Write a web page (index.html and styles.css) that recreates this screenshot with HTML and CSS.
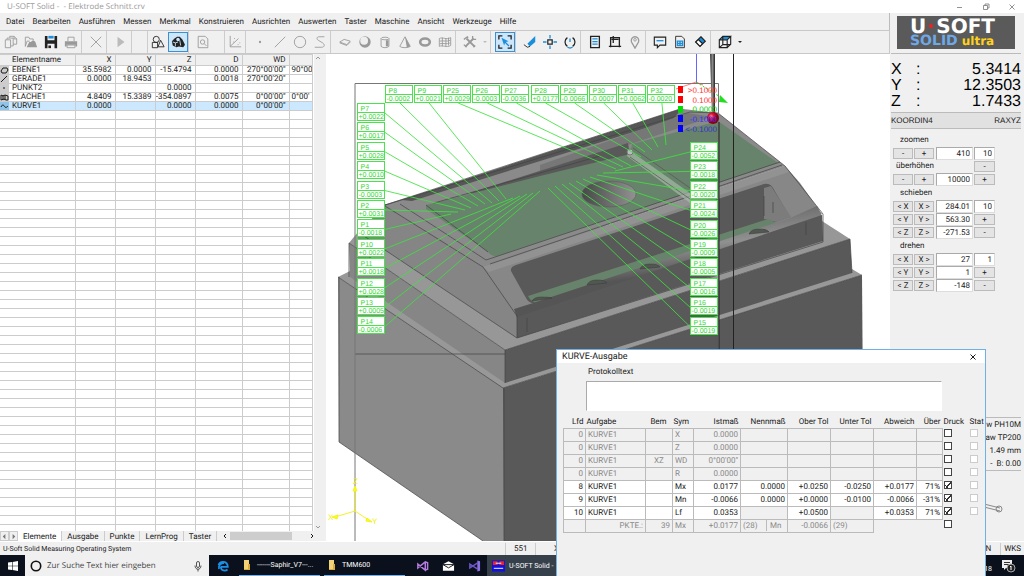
FILE: index.html
```html
<!DOCTYPE html>
<html lang="de">
<head>
<meta charset="utf-8">
<title>U-SOFT Solid - Elektrode Schnitt.crv</title>
<link rel="stylesheet" href="styles.css">
</head>
<body>
<div class="desktop">
  <header class="titlebar">
    <span>U-SOFT Solid -&nbsp; - Elektrode Schnitt.crv</span>
    <div class="window-buttons">
      <button type="button" aria-label="Minimieren"><svg viewBox="0 0 8 8"><path d="M1 4.500h5"/></svg></button>
      <button type="button" aria-label="Wiederherstellen"><svg viewBox="0 0 8 8"><path d="M1.500 2.500h4v4h-4zM3 2.500V1h4v4H5.500"/></svg></button>
      <button type="button" aria-label="Schließen"><svg viewBox="0 0 8 8"><path d="M1.500 1.500l5 5M6.500 1.500l-5 5"/></svg></button>
    </div>
  </header>

  <div class="app">
    <div class="main">
      <nav class="menu" aria-label="Hauptmenü">
        <button type="button">Datei</button><button type="button">Bearbeiten</button><button type="button">Ausführen</button><button type="button">Messen</button><button type="button">Merkmal</button><button type="button">Konstruieren</button><button type="button">Ausrichten</button><button type="button">Auswerten</button><button type="button">Taster</button><button type="button">Maschine</button><button type="button">Ansicht</button><button type="button">Werkzeuge</button><button type="button">Hilfe</button>
      </nav>

      <div class="toolbar" role="toolbar" aria-label="Werkzeuge">
        <button type="button" class="tool" aria-label="Neu"><svg viewBox="0 0 16 16"><path d="M1.500 5.500h6v9h-6zM3.500 5V3.500h7v9H8M6.500 3V1.500h5l3 3v6h-4M11.500 1.500v3h3"/></svg></button>
        <button type="button" class="tool" aria-label="Öffnen"><svg viewBox="0 0 16 16"><path d="M1.500 13V2.500h4l1 2h4v2M1.500 13l2-6h3"/><path class="fill" d="M3 14l3-6h2c1-2 4-2 5 0l2 6z"/></svg></button>
        <button type="button" class="tool dark" aria-label="Speichern"><svg viewBox="0 0 16 16"><path class="fill" d="M1 1h3v5h8V1h3v14h-3v-5H4v5H1z"/><path class="bluefill" d="M5 1h6v3H5z"/><path class="fill" d="M5 12h3v3H5z"/></svg></button>
        <button type="button" class="tool" aria-label="Drucken"><svg viewBox="0 0 16 16"><path d="M4.500 7V2.500h7V7"/><path class="fill" d="M1 7h14v6h-2v-2H3v2H1z"/><path d="M3.500 11.500h9v3h-9z"/></svg></button>
        <span class="sep"></span>
        <button type="button" class="tool" aria-label="Löschen"><svg viewBox="0 0 16 16"><path d="M2 2l12 12M14 2L2 14"/></svg></button>
        <span class="sep"></span>
        <button type="button" class="tool pale" aria-label="Start"><svg viewBox="0 0 16 16"><path class="fill" d="M4 2l8 6-8 6z"/></svg></button>
        <span class="sep wide"></span>
        <button type="button" class="tool dark" aria-label="Elemente"><svg viewBox="0 0 16 16"><circle cx="6" cy="5" r="3.500"/><path d="M1.500 8.500h6v6h-6zM11 6l4 7.500H8z"/></svg></button>
        <button type="button" class="tool dark active" aria-label="Flächenmodell" aria-pressed="true"><svg viewBox="0 0 16 16"><path class="fill" d="M1 7l3-3 3-2h3l3 3 3 6-2 3-5-1-3 1-4-2z"/><circle cx="8" cy="5" r="2" fill="#cce6fb" stroke="none"/><path d="M2 8l3 1 3-1M5 9v4M10 6l1 6" stroke="#cce6fb"/></svg></button>
        <span class="sep"></span>
        <button type="button" class="tool" aria-label="Vorschau"><svg viewBox="0 0 16 16"><path d="M2.500 1.500h8l3 3v10h-11z"/><circle cx="7.500" cy="8" r="2.500"/><path d="M9.500 10l2.500 2.500"/></svg></button>
        <span class="sep end"></span>
        <button type="button" class="tool" aria-label="Koordinaten"><svg viewBox="0 0 16 16"><path d="M2.500 1v12.500H15M2.500 13L12 4M7 4h1M13 9h1M6 8h1M11 11h1"/></svg></button>
        <span class="sep"></span>
        <button type="button" class="tool" aria-label="Punkt"><svg viewBox="0 0 16 16"><circle class="fill" cx="8" cy="8" r="1.300"/></svg></button>
        <button type="button" class="tool" aria-label="Gerade"><svg viewBox="0 0 16 16"><path d="M2 14L14 2"/></svg></button>
        <button type="button" class="tool" aria-label="Kreis"><svg viewBox="0 0 16 16"><circle cx="8" cy="8" r="6.500"/></svg></button>
        <button type="button" class="tool" aria-label="Kurve"><svg viewBox="0 0 16 16"><path d="M13 2H7C4 2 4 5 6 6l5 3c3 2 2 5-1 5H2"/></svg></button>
        <span class="sep"></span>
        <button type="button" class="tool" aria-label="Ebene"><svg viewBox="0 0 16 16"><path d="M2 8l5-3 7 2-4 4z"/><path d="M2 9l8 3 4-4" /></svg></button>
        <button type="button" class="tool" aria-label="Kugel"><svg viewBox="0 0 16 16"><circle class="fill" cx="8" cy="8" r="6.500"/><circle cx="7" cy="6.500" r="4.500" fill="#eee" stroke="none"/></svg></button>
        <button type="button" class="tool" aria-label="Zylinder"><svg viewBox="0 0 16 16"><path d="M3.500 4v9c2 2 7 2 9 0V4"/><ellipse cx="8" cy="4" rx="4.500" ry="1.500"/><path class="fill" d="M9 6h3v7H9z"/></svg></button>
        <button type="button" class="tool" aria-label="Kegel"><svg viewBox="0 0 16 16"><path d="M8 2L2 13c2 2 10 2 12 0z"/><path class="fill" d="M8 2l6 11-4 1z"/></svg></button>
        <button type="button" class="tool" aria-label="Torus"><svg viewBox="0 0 16 16"><ellipse cx="8" cy="8" rx="5.500" ry="4" stroke-width="3"/></svg></button>
        <button type="button" class="tool" aria-label="Fläche"><svg viewBox="0 0 16 16"><path d="M1.500 4c4-2 8 2 13-1v9c-5 3-9-1-13 1zM5 3v10M9 4v9M12 3v9M2 7c4-1 8 1 12-1M2 10c4-1 8 1 12-1"/></svg></button>
        <span class="sep"></span>
        <button type="button" class="tool" aria-label="Einstellungen"><svg viewBox="0 0 16 16"><path stroke-width="2.200" d="M4 4l9 9M12 4l-9 9"/><path stroke-width="1.500" d="M1 5l4-3 1 1M11 1v3l1 1h3M1 11l3 3M12 14l2-2"/></svg></button>
        <button type="button" class="drop pale" aria-label="Mehr Einstellungen"><svg viewBox="0 0 6 6"><path d="M1 2h4L3 4z"/></svg></button>
        <span class="sep"></span>
        <button type="button" class="tool dark active" aria-label="Auswahl" aria-pressed="true"><svg viewBox="0 0 16 16"><path stroke-width="1.500" d="M1 5V1h4M11 1h4v4M15 11v4h-4M5 15H1v-4"/><path class="bluefill" d="M4 3l8 4-3 1 4 4-1 1-4-4-1 3z"/></svg></button>
        <span class="sep"></span>
        <button type="button" class="tool dark" aria-label="Markieren"><svg viewBox="0 0 16 16"><path class="bluefill" d="M14 1v7l-6 5-3-3z"/><path d="M1 11l4 3 3-1"/></svg></button>
        <button type="button" class="tool dark" aria-label="Zentrieren"><svg viewBox="0 0 16 16"><path stroke-width="1.400" d="M5.500 5.500h5v5h-5z"/><path class="blueline" d="M8 0v4M8 12v4M0 8h4M12 8h4"/></svg></button>
        <button type="button" class="tool dark" aria-label="Drehen"><svg viewBox="0 0 16 16"><path stroke-width="1.400" d="M5 3a6 6 0 0 0 0 10M11 3a6 6 0 0 1 0 10"/><path class="blueline" d="M8 4v4M5 14l3 1 3-1"/></svg></button>
        <span class="sep"></span>
        <button type="button" class="tool dark" aria-label="Protokoll"><svg viewBox="0 0 16 16"><path stroke-width="1.500" d="M3 1.500h10v13H3z"/><path class="blueline" d="M5 4.500h6M5 7.500h6M5 10.500h6"/></svg></button>
        <button type="button" class="tool dark" aria-label="Maschine"><svg viewBox="0 0 16 16"><path stroke-width="1.500" d="M3 14V3h10v11M1 13h14M6 1v8M4 5h8"/></svg></button>
        <button type="button" class="tool" aria-label="Position"><svg viewBox="0 0 16 16"><path stroke-width="1.500" d="M8 15L4 8c-2-8 10-8 8 0z"/><circle cx="8" cy="5.500" r="1.500"/></svg></button>
        <span class="sep"></span>
        <button type="button" class="tool dark" aria-label="Kommentar"><svg viewBox="0 0 16 16"><path stroke-width="1.300" d="M1.500 2.500h13v9H8l-3 3v-3H1.500z"/><path class="blueline" d="M4 6.500h8"/></svg></button>
        <button type="button" class="tool dark" aria-label="Tabelle"><svg viewBox="0 0 16 16"><path d="M3 1.500h7l3 3v10H3z"/><path class="blueline" d="M5 7h6v5H5zM5 9.500h6M8 7v5"/></svg></button>
        <button type="button" class="tool dark" aria-label="Farbe"><svg viewBox="0 0 16 16"><path class="bluefill" d="M9 2l5 5-3 3-5-5z"/><path fill="#fff" d="M6 5l5 5-3 3-5-5z"/><path stroke-width="1.400" d="M9 2l5 5-6 6-5-5zM6 5l5 5"/></svg></button>
        <span class="sep"></span>
        <button type="button" class="tool dark" aria-label="Ansicht"><svg viewBox="0 0 16 16"><path class="bluefill" d="M2 5l4-3h9l-4 3z"/><path stroke-width="1.300" d="M1.500 5.500h9v9h-9zM1.500 5.500l4-4h9l-4 4M14.500 1.500v9l-4 4M5.500 2v9h9M5.500 11l-4 3.500"/></svg></button>
        <button type="button" class="drop dark" aria-label="Mehr Ansichten"><svg viewBox="0 0 6 6"><path d="M1 2h4L3 4z"/></svg></button>
      </div>

      <div class="workspace">
        <section class="elements">
          <div class="list-area">
            <div class="list">
              <table class="element-table">
                <colgroup><col class="c-name"><col class="c-x"><col class="c-x"><col class="c-x"><col class="c-d"><col class="c-d"><col></colgroup>
                <thead><tr><th class="name">Elementname</th><th>X</th><th>Y</th><th>Z</th><th>D</th><th>WD</th><th></th></tr></thead>
                <tbody id="elements"></tbody>
              </table>
            </div>
            <div class="vscroll"><svg viewBox="0 0 8 8"><path d="M2 5l2-2 2 2"/></svg><svg viewBox="0 0 8 8"><path d="M2 3l2 2 2-2"/></svg></div>
          </div>
          <div class="tabs">
            <button type="button" class="step" aria-label="Zurück"><svg viewBox="0 0 8 8"><path class="fill" d="M5 1v6L2 4z"/></svg></button>
            <button type="button" class="step" aria-label="Vor"><svg viewBox="0 0 8 8"><path class="fill" d="M3 1v6l3-3z"/></svg></button>
            <button type="button" class="tab current">Elemente</button><button type="button" class="tab">Ausgabe</button><button type="button" class="tab">Punkte</button><button type="button" class="tab">LernProg</button><button type="button" class="tab">Taster</button>
            <div class="hscroll"><svg viewBox="0 0 8 8"><path d="M5 2L3 4l2 2"/></svg><i></i><svg viewBox="0 0 8 8"><path d="M3 2l2 2-2 2"/></svg></div>
          </div>
        </section>

        <section class="viewport" aria-label="3D-Ansicht">
          <svg id="scene" viewBox="326 54 564 487" preserveAspectRatio="xMinYMin meet">
            <defs>
              <linearGradient id="hole"><stop offset="0" stop-color="#484848"/><stop offset="1" stop-color="#929292"/></linearGradient>
              <linearGradient id="shaft"><stop offset="0" stop-color="#333"/><stop offset=".5" stop-color="#888"/><stop offset="1" stop-color="#222"/></linearGradient>
              <linearGradient id="bevel" x1="0" y1="0" x2=".35" y2="1"><stop offset=".3" stop-color="#6e6e6e"/><stop offset=".5" stop-color="#909090"/><stop offset=".7" stop-color="#555"/></linearGradient>
              <radialGradient id="ball" cx=".35" cy=".35"><stop offset="0" stop-color="#ff8aa0"/><stop offset=".4" stop-color="#d81838"/><stop offset="1" stop-color="#8a0018"/></radialGradient>
            </defs>
            <g class="solid">
              <path fill="#8a8a8a" d="M338 277L504 388V541H483L339 442z"/>
              <path fill="#595959" d="M503 388L862 275L864 541H504z"/>
              <path fill="#989898" d="M338 277L350 271L505 379L852 269L862 275L503 388z"/>
              <path fill="#868686" d="M349 243L505 350V383L350 277z"/>
              <path fill="#595959" d="M505 350L850 239L852 273L505 383z"/>
              <path fill="#979797" d="M349 243L358 232L400 230L822 221L850 239L505 350z"/>
              <path fill="#858585" d="M385 204L483 266L517 316V338L385 250V240H358V232L385 206z"/>
              <path fill="#8a8a8a" d="M385 205L683 109L718 113L785 166L483 267z"/>
              <path fill="#565656" d="M402 200L683 108L672 120L412 201z"/>
              <path fill="#777" d="M540 165L688 113L712 117L640 141L540 173z"/>
              <path fill="#595959" d="M470 193L628 143L630 156L470 200z"/>
              <path fill="#68836b" d="M426 205L540 176L630 154L632 144L718 121L778 163L497 256Q492 257 488 252L426 209z"/>
              <path fill="#878787" d="M483 267L785 166L800 183L822 214L517 316z"/>
              <path fill="#595959" d="M511 271Q510 267 516 265L764 184Q770 183 773 188L790 217L535 303Q529 304 526 298z"/>
              <path fill="#7c7c7c" d="M764 188L771 186L791 217L776 222L764 219z"/>
              <path fill="#68836b" d="M528 296L768 219L779 224L540 303Q532 304 528 296z"/>
              <path fill="url(#bevel)" d="M530 304L790 218L817 206L822 216L517 318L514 309z"/>
              <path fill="#595959" d="M517 317L822 215L823 241L517 338z"/>
              <path fill="#929292" d="M483 267L785 166L789 172L489 272z"/>
            </g>
            <g fill="none" stroke="#444" stroke-width=".7">
              <path d="M338 277L503 388L862 275M504 388V541M349 243L505 350L850 239L852 273M505 350V383M339 277V442L483 541M349 243V277M385 206L483 267L517 316V338L823 242V214L785 166M385 205L683 108M400 204L486 260L780 162M490 264L782 165M358 232L517 338M385 205L690 112L718 113L785 166M426 205L488 252M434 203L600 156M527 318V332M806 222V235M764 196V216M773 202V213M355 354H505"/>
            </g>
            <ellipse cx="609" cy="194" rx="27" ry="13" fill="url(#hole)" stroke="#555" stroke-width=".5"/>
            <g fill="#505850" stroke="#3a3a3a" stroke-width=".5">
              <path d="M587 285q2-5 10-5t10 3zM640 269q2-5 10-5t10 3zM749 234q2-5 10-5t10 3zM532 301q2-4 10-4t10 1z"/>
            </g>
            <path fill="#a9beaa" fill-opacity=".65" d="M629 150L690 193V203L627 156z"/>
            <path stroke="#555" d="M633 148L690 188M630 157L690 199" stroke-width=".7"/>
            <circle cx="630" cy="152" r="3" fill="#bbb" stroke="#777"/>
            <g fill="none">
              <path stroke="#777" d="M355 541V83.500H718.500V380"/>
              <path stroke="#222" d="M733.500 54V380M719 122V380"/>
              <path stroke="#66f" d="M696.500 54V83"/>
              <path stroke="#f44" stroke-width=".7" d="M676 89L696 82L703 85"/>
              <path stroke="#2d2" stroke-dasharray="2 2" d="M696 82L722 98"/>
            </g>
            <path fill="#2d2" d="M720 95l8 8-9-1z"/>
            <path fill="url(#shaft)" d="M710 54h5v62h-3z"/>
            <g id="leaders"></g>
            <g id="labels"></g>
            <circle cx="713" cy="118" r="6" fill="url(#ball)"/>
            <g class="legend">
              <path fill="#f00" d="M678 86h5v7h-5zM678 96h5v7h-5z"/><path fill="#0d0" d="M678 106h5v7h-5z"/><path fill="#00f" d="M678 115h5v7h-5zM678 125h5v7h-5z"/>
              <text x="717" y="93" fill="#f33">&gt;0.1000</text><text x="717" y="103" fill="#f33">0.1000</text><text x="717" y="112" fill="#0c0">0.0000</text><text x="717" y="122" fill="#33f">-0.1000</text><text x="717" y="132" fill="#33c">&lt;-0.1000</text>
            </g>
            <g class="axes">
              <path d="M355 489V511L335 517M355 511L370 521"/>
              <path class="tip" d="M353 491l2-5 2 5zM338 515l-6 2 5 2zM367 518l5 4-6-1z"/>
              <text x="353" y="484">Z</text><text x="328" y="520">X</text><text x="372" y="524">Y</text>
            </g>
          </svg>
        </section>
      </div>
    </div>

    <aside class="sidebar">
      <div class="brand"><div class="brand-top">U<i></i>SOFT</div><div class="brand-sub"><span>SOLID</span><b>ultra</b></div></div>
      <dl class="position"><dt>X</dt><dd>:</dd><dd class="num">5.3414</dd><dt>Y</dt><dd>:</dd><dd class="num">12.3503</dd><dt>Z</dt><dd>:</dd><dd class="num">1.7433</dd></dl>
      <div class="coordbar"><span>KOORDIN4</span><span>RAXYZ</span></div>
      <div class="controls">
        <fieldset class="group">
          <label class="caption" for="zoom">zoomen</label>
          <button type="button">-</button><button type="button">+</button><input class="val" id="zoom" value="410"><input value="10" aria-label="Schritt Zoom">
          <label class="cap2" for="over">überhöhen</label><button type="button" class="last">-</button>
          <button type="button">-</button><button type="button">+</button><input class="val" id="over" value="10000"><button type="button">+</button>
        </fieldset>
        <fieldset class="group">
          <label class="caption" for="sx">schieben</label>
          <button type="button">&lt; X</button><button type="button">X &gt;</button><input class="val" id="sx" value="284.01"><input value="10" aria-label="Schritt Schieben">
          <button type="button">&lt; Y</button><button type="button">Y &gt;</button><input class="val" value="563.30" aria-label="Schieben Y"><button type="button">+</button>
          <button type="button">&lt; Z</button><button type="button">Z &gt;</button><input class="val" value="-271.53" aria-label="Schieben Z"><button type="button">-</button>
        </fieldset>
        <fieldset class="group">
          <label class="caption" for="dx">drehen</label>
          <button type="button">&lt; X</button><button type="button">X &gt;</button><input class="val" id="dx" value="27"><input value="1" aria-label="Schritt Drehen">
          <button type="button">&lt; Y</button><button type="button">Y &gt;</button><input class="val" value="1" aria-label="Drehen Y"><button type="button">+</button>
          <button type="button">&lt; Z</button><button type="button">Z &gt;</button><input class="val" value="-148" aria-label="Drehen Z"><button type="button">-</button>
        </fieldset>
      </div>
      <div class="probe">
        <div class="probe-info"><p>w PH10M</p><p>aw TP200</p><p>1.49 mm</p><p>-&nbsp; B: 0.00</p></div>
        <svg class="probe-pic" viewBox="0 0 40 70"><path d="M0 33l16 4M0 36l16 4" /><circle cx="15" cy="38" r="3"/></svg>
      </div>
    </aside>
  </div>

  <footer class="status"><span class="grow">U-Soft Solid Measuring Operating System</span><span class="cell count">551</span><span class="cell axis">X</span><span class="mode">N</span><span class="cell wks">WKS</span></footer>

  <nav class="taskbar" aria-label="Taskleiste">
    <button type="button" class="start" aria-label="Start"><svg viewBox="0 0 10 10"><path fill="#fff" d="M0 1.500l4-.5v3.700H0zM4.600.900L10 0v4.700H4.600zM0 5.300h4V9l-4-.5zM4.600 5.300H10V10l-5.400-.9z"/></svg></button>
    <label class="search"><svg viewBox="0 0 12 12"><circle cx="6" cy="6" r="4.700" fill="none" stroke="#111" stroke-width="1.600"/></svg><input placeholder="Zur Suche Text hier eingeben" aria-label="Suche"><svg viewBox="0 0 12 12" fill="none" stroke="#555"><rect x="4.500" y="1.500" width="3" height="6" rx="1.500"/><path d="M3 5.500c0 5 6 5 6 0M6 9v2.500"/></svg></label>
    <button type="button" class="task edge" aria-label="Edge"><svg viewBox="0 0 12 12"><path d="M1.500 5C3 .5 10.500.5 10.800 6.800H4M2 9c-1-4 2-6 5-6M3.800 6.500c0 5 5 4.500 6.700 3" fill="none" stroke="#1b8fe8" stroke-width="1.800"/></svg></button>
    <button type="button" class="task file"><svg viewBox="0 0 12 12"><path fill="#f3d37a" d="M3 1h5v10H3z"/><path fill="#dba93c" d="M7 5h2v6H3v-1h4z"/></svg><span>-------Saphir_V7---...</span></button>
    <button type="button" class="task file"><svg viewBox="0 0 12 12"><path fill="#f3d37a" d="M3 1h5v10H3z"/><path fill="#dba93c" d="M7 5h2v6H3v-1h4z"/></svg><span>TMM600</span></button>
    <button type="button" class="task icon" aria-label="Visual Studio"><svg viewBox="0 0 14 12"><path fill="none" stroke="#b57be0" stroke-width="1.600" d="M10 1.500v9L2 4v4l8-6.500 2.500 1v7l-2.500 1"/></svg></button>
    <button type="button" class="task icon" aria-label="Mail"><svg viewBox="0 0 14 12"><path fill="#fff" d="M1 4l6-3 6 3v7H1z"/><path stroke="#111" fill="none" d="M1 4.500h12L7 8z"/></svg></button>
    <button type="button" class="task icon" aria-label="Visual Studio 2"><svg viewBox="0 0 14 12"><path fill="none" stroke="#6d55c8" stroke-width="1.600" d="M10 3L2 8V4l8 5"/><path fill="#8a70e0" d="M10 0l3 1v10l-3 1z"/></svg></button>
    <button type="button" class="task running"><svg viewBox="0 0 14 12"><path fill="#1111dd" d="M0 0h14v12H0z"/><path fill="#e22" d="M1 1h5v4H1zM8 1h5v4H8z"/><path stroke="#fff" d="M2 8.500h10M4 3h6"/></svg><span>U-SOFT Solid -</span></button>
    <span class="clock">18</span>
    <button type="button" class="notes" aria-label="Mitteilungen"><svg viewBox="0 0 16 14"><path fill="#eee" d="M2 1h10v8H6l-2 2V9H2z"/><path stroke="#333" d="M4 3.500h6M4 5.500h6"/><circle cx="11" cy="9" r="4" fill="#222" stroke="#aaa"/><path stroke="#fff" d="M10 8l1-1v4"/></svg></button>
  </nav>

  <section class="dialog" role="dialog" aria-labelledby="dlg-title">
    <div class="dialog-title"><span id="dlg-title">KURVE-Ausgabe</span><button type="button" aria-label="Schließen"><svg viewBox="0 0 8 8"><path d="M1.500 1.500l5 5M6.500 1.500l-5 5"/></svg></button></div>
    <div class="dialog-body">
      <label class="protocol"><span>Protokolltext</span><textarea></textarea></label>
      <table class="result">
        <colgroup><col class="w-lfd"><col class="w-auf"><col class="w-bem"><col class="w-sym"><col class="w-num"><col class="w-num"><col class="w-tol"><col class="w-tol"><col class="w-tol"><col class="w-ueb"><col class="w-chk"><col></colgroup>
        <thead><tr><th>Lfd</th><th class="l">Aufgabe</th><th class="c">Bem</th><th class="l">Sym</th><th>Istmaß</th><th>Nennmaß</th><th>Ober Tol</th><th>Unter Tol</th><th>Abweich</th><th>Über</th><th class="l">Druck</th><th class="l">Stat</th></tr></thead>
        <tbody id="results"></tbody>
      </table>
    </div>
  </section>
</div>
<script src="app.js"></script>
</body>
</html>
```
FILE: styles.css
```css
* { box-sizing: border-box; }
html, body { height: 100%; }
body { margin: 0; font: 8px/10px Roboto, "Liberation Sans", sans-serif; color: #1a1a1a; overflow: hidden; text-rendering: geometricPrecision; }
button, input, textarea { font: inherit; color: inherit; margin: 0; padding: 0; border: 0; border-radius: 0; background: none; outline: 0; text-rendering: inherit; }
svg { display: block; fill: none; stroke: currentColor; }
p { margin: 0; }
table { border-collapse: collapse; table-layout: fixed; }

.desktop { position: relative; height: 100%; display: grid; grid-template-rows: 13px minmax(0, 1fr) 14px 21px; background: #f0f0f0; }
.titlebar { display: flex; justify-content: space-between; align-items: center; background: #fff; color: #999; padding: 0 8px 0 7px; font: 8px/10px "Open Sans", sans-serif; }
.window-buttons { display: flex; gap: 18px; color: #777; }
.window-buttons svg { width: 8px; height: 8px; stroke-width: .8; }

.app { display: grid; grid-template-columns: minmax(0, 1fr) 134px; min-height: 0; }
.main { display: grid; grid-template-rows: 17px 24px minmax(0, 1fr); min-height: 0; }
.menu { display: flex; align-items: center; gap: 8px; padding-left: 6px; border-right: 1px solid #bbb; }
.toolbar { display: flex; align-items: center; padding-left: 1px; border: 1px solid #c8c8c8; border-width: 1px 1px 1px 0; }
.tool { width: 20px; height: 20px; display: grid; place-items: center; color: #999; flex: none; }
.tool svg { width: 14px; height: 14px; }
.tool.active { background: #cce6fb; border: 1px solid #3d8fd0; }
.dark, .tool.dark { color: #222; }
.pale, .tool.pale { color: #bbb; }
.fill { fill: currentColor; stroke: none; }
.bluefill { fill: #1b8fdc; stroke: none; }
.blueline { stroke: #1b8fdc; stroke-width: 1.5; }
.sep { flex: none; width: 5px; height: 22px; border-left: 1px solid #ccc; border-right: 1px solid transparent; }
.sep.wide { width: 17px; border-right-color: #ccc; }
.sep.end { width: 12px; border-color: transparent #ccc transparent transparent; }
.drop { width: 10px; display: grid; place-items: center; }
.drop svg { width: 6px; height: 6px; fill: currentColor; stroke: none; }

.workspace { display: grid; grid-template-columns: 326px minmax(0, 1fr); min-height: 0; }
.elements { display: grid; grid-template-rows: minmax(0, 1fr) 10px; min-height: 0; background: #f0f0f0; }
.list-area { display: grid; grid-template-columns: minmax(0, 1fr) 8px; padding-right: 4px; min-height: 0; }
.list { overflow: hidden; background: #fff; }
.element-table { width: 313px; }
.element-table th { height: 11px; background: #f0f0f0; font-weight: 400; text-align: right; }
.element-table td { height: 9px; text-align: right; }
.element-table th, .element-table td { padding: 0 3px 0 0; line-height: 8px; border: 1px solid #ccc; border-left: 0; overflow: hidden; white-space: nowrap; }
.element-table .name { text-align: left; padding-left: 12px; }
.element-table td.name { padding-left: 0; }
.element-table td:last-child { padding: 0 0 0 2px; text-align: left; }
.element-table td .kind { display: inline-block; vertical-align: top; width: 9px; height: 8px; margin-right: 3px; background: #ccc; }
.element-table .selected td { background: #cce8ff; }
.element-table .selected .kind { background: #8fc4ea; }
.c-name { width: 75px; }
.c-x { width: 40px; }
.c-d { width: 47px; }
.vscroll { display: flex; flex-direction: column; justify-content: space-between; color: #999; }
.vscroll svg, .hscroll svg { width: 8px; height: 8px; }
.tabs { display: flex; align-items: stretch; line-height: 9px; }
.step { width: 9px; border: 1px solid #ccc; color: #777; }
.step svg { width: 7px; height: 7px; }
.tab { padding: 0 5px; border-right: 1px solid #ccc; }
.tab.current { background: #fff; }
.hscroll { flex: 1; display: flex; align-items: center; padding: 0 10px 0 4px; }
.hscroll i { width: 62px; height: 8px; background: #cdcdcd; margin: 0 auto 0 1px; }

.viewport { background: #fff; min-height: 0; overflow: hidden; }
.viewport > svg { width: 100%; height: 100%; stroke: none; }
.tag rect { fill: #fff; stroke: #4be34b; }
.tag path { stroke: #4be34b; }
.tag text { fill: #35d835; font: 7px "Liberation Sans", sans-serif; }
#leaders { stroke: #3fe03f; stroke-width: 1; stroke-opacity: .85; }
.legend text { font: 8px "Liberation Sans", sans-serif; text-anchor: end; }
.axes path { stroke: #f2f22a; }
.axes .tip { fill: #ff0; }
.axes text { fill: #f0f000; font: 8px "Liberation Sans", sans-serif; }

.sidebar { display: flex; flex-direction: column; padding: 3px 3px 0 1px; min-height: 0; }
.brand { margin: 0 6px 4px; height: 33px; background: #5a5a5a; color: #fff; padding: 1px 0 0 13px; font-family: "DejaVu Sans", sans-serif; font-weight: 700; }
.brand-top { display: flex; align-items: center; font-size: 20px; line-height: 18px; }
.brand-top i { width: 4px; height: 4px; margin: 0 3px; border-radius: 50%; background: #f02020; }
.brand-sub { display: flex; align-items: baseline; gap: 4px; line-height: 13px; }
.brand-sub span { font-size: 14px; color: #6fa8e6; }
.brand-sub b { font-size: 12px; color: #ffd21a; }
.position { margin: 0; padding: 8px 0 2px; border-top: 1px solid #bbb; display: grid; grid-template-columns: 25px 20px 1fr; font: 16px/16px "Liberation Sans", sans-serif; color: #000; }
.position dd { margin: 0; }
.position .num { text-align: right; }
.coordbar { display: flex; justify-content: space-between; align-items: center; height: 17px; background: #e1e1e1; border: 1px solid #bbb; border-width: 1px 0; font-family: "Liberation Sans", sans-serif; }
.controls { display: grid; gap: 1px; padding: 5px 0 0 2px; }
.group { margin: 0; padding: 0; border: 0; min-width: 0; display: grid; grid-template-columns: 20px 20px 38px 21px; grid-auto-rows: 13px; column-gap: 1px; }
.group button { margin: 1px 0; border: 1px solid #bbb; background: #e4e4e4; line-height: 9px; white-space: nowrap; }
.group input { width: 100%; min-width: 0; margin: 0; border: 1px solid #aaa; border-color: #aaa #ddd #ddd #aaa; background: #fff; text-align: right; padding-right: 2px; }
.group .val { width: 37px; justify-self: end; }
.caption { grid-column: 1 / -1; padding-left: 7px; line-height: 12px; }
.cap2 { grid-column: 1 / 4; padding-left: 3px; line-height: 12px; }
.probe { margin-top: auto; }
.probe-info { border: 1px solid #bbb; border-width: 1px 0; text-align: right; line-height: 13px; }
.probe-pic { width: 40px; height: 70px; margin-left: 93px; color: #888; }

.status { display: flex; align-items: center; border-top: 1px solid #fff; padding: 0 3px; line-height: 12px; background: #f0f0f0; }
.grow { width: 502px; font-size: 7px; }
.cell { border-left: 1px solid #ccc; }
.count { width: 30px; padding-left: 8px; }
.axis { padding-left: 18px; }
.mode { margin-left: auto; padding-right: 9px; }
.wks { padding-left: 3px; }

.taskbar { display: flex; background: #0a111c; color: #fff; font-size: 7px; }
.start { width: 25px; display: grid; place-items: center; }
.start svg { width: 10px; height: 10px; stroke: none; }
.search { width: 184px; display: flex; align-items: center; gap: 5px; padding: 0 5px; background: #f0f0f0; color: #333; }
.search input { flex: 1; min-width: 0; font: 8px "Open Sans", sans-serif; }
.search input::placeholder { color: #444; opacity: 1; }
.search svg { width: 12px; height: 12px; stroke: none; flex: none; }
.search svg:last-child { stroke: #555; }
.task { display: flex; align-items: center; gap: 4px; flex: none; white-space: nowrap; }
.task svg { width: 12px; height: 12px; stroke: none; }
.edge { width: 30px; padding-left: 8px; }
.file { width: 81px; margin-right: 4px; padding-left: 2px; border-bottom: 1px solid #6cb2ee; }
.icon { width: 26px; justify-content: center; }
.icon svg, .running svg { width: 13px; height: 12px; }
.running { width: 72px; padding-left: 5px; background: #36404b; }
.clock { margin-left: auto; align-self: center; padding: 6px 8px 0 0; }
.notes { width: 24px; }
.notes svg { width: 16px; height: 14px; stroke: none; }

.dialog { position: absolute; right: 38px; bottom: 0; width: 430px; height: 227px; display: flex; flex-direction: column; background: #f0f0f0; border: 1px solid #6fb1e6; border-bottom: 0; }
.dialog-title { display: flex; justify-content: space-between; align-items: center; height: 13px; padding: 0 8px 0 5px; background: #fff; font-size: 9px; }
.dialog-title svg { width: 8px; height: 8px; }
.dialog-body { padding: 4px 0 0 6px; }
.protocol { display: block; padding: 0 43px 0 23px; }
.protocol span { padding-left: 2px; line-height: 10px; display: block; margin-bottom: 4px; }
.protocol textarea { display: block; width: 100%; height: 30px; resize: none; background: #fff; border: 1px solid #aaa; border-color: #aaa #fff #fff #aaa; }
.result { width: 100%; margin-top: 5px; }
.result th { height: 12px; padding: 0 2px 0 1px; font-weight: 400; text-align: right; white-space: nowrap; }
.result td { height: 13px; padding: 0 2px; line-height: 11px; text-align: right; border: 1px solid #bbb; white-space: nowrap; background: #fff; }
.result .off td { color: #888; background: #f0f0f0; }
.result td.empty { background: #f0f0f0; }
.result td.box, .result .off td.box { border: 0; background: none; padding: 0 1px; text-align: left; }
.result td.none, .result .off td.none { border: 0; }
.result .l, .result td.l { text-align: left; }
.result .c, .result td.c { text-align: center; }
.result input { appearance: none; display: inline-block; vertical-align: top; width: 8px; height: 8px; border: 1px solid #444; background: #fff; }
.result input:disabled { border-color: #ccc; }
.result input:checked { background: linear-gradient(45deg, transparent 42%, #333 42% 62%, transparent 62%) 0 3px / 3px 3px no-repeat, linear-gradient(-45deg, transparent 42%, #333 42% 58%, transparent 58%) 1px 0 / 5px 6px no-repeat, #fff; }
.split { display: flex; justify-content: space-between; }
.split span + span { width: 19px; padding-left: 3px; border-left: 1px solid #bbb; text-align: left; }
.w-lfd { width: 22px; }
.w-auf { width: 60px; }
.w-bem { width: 27px; }
.w-sym { width: 21px; }
.w-num { width: 47px; }
.w-tol { width: 43px; }
.w-ueb { width: 26px; }
.w-chk { width: 26px; }
```
FILE: app.js
```js
const elements = [
  ["EBENE1", "35.5982", "0.0000", "-15.4794", "0.0000", "270°00'00\"", "90°00'", "M1 5l2-3h4l1 2-2 3H2z"],
  ["GERADE1", "0.0000", "18.9453", "", "0.0018", "270°00'20\"", "", "M1 7l6-6"],
  ["PUNKT2", "", "", "0.0000", "", "", "", "M3 4h2"],
  ["FLÄCHE1", "4.8409", "15.3389", "-354.0897", "0.0075", "0°00'00\"", "0°00'", "M1 2l2 1 2-1 3 1v4H6L4 6 1 7zM3 2v5M5 2v5"],
  ["KURVE1", "0.0000", "", "0.0000", "0.0000", "0°00'00\"", "", "M1 5c2-4 3-1 4 0s2 0 3-1"]
];
const blankRows = 48;
let rows = elements.map((e, i) =>
  `<tr${i === 4 ? ' class="selected"' : ""}><td class="name"><span class="kind"><svg viewBox="0 0 9 8"><path d="${e[7]}"/></svg></span>${e[0]}</td>` +
  e.slice(1, 7).map(v => `<td>${v}</td>`).join("") + "</tr>").join("");
rows += ("<tr>" + "<td></td>".repeat(7) + "</tr>").repeat(blankRows);
document.getElementById("elements").innerHTML = rows;

// Each point: name, value, label x/y, leader start x/y, leader end x/y
const points = [];
const topRow = [["P8", "-0.0002", 499, 201], ["P9", "+0.0021", 506, 199], ["P25", "+0.0029", 616, 169], ["P26", "-0.0003", 623, 167], ["P27", "-0.0036", 631, 166], ["P28", "+0.0177", 641, 157], ["P29", "-0.0066", 645, 152], ["P30", "-0.0007", 652, 150], ["P31", "+0.0062", 658, 147], ["P32", "-0.0020", 666, 145]];
topRow.forEach((p, i) => { const x = 386 + i * 29.1; points.push([p[0], p[1], x, 86, x + 14, 103, p[2], p[3]]); });
const leftColumn = [["P7", "+0.0022", 492, 203], ["P6", "+0.0017", 485, 204], ["P5", "+0.0028", 478, 206], ["P4", "+0.0010", 471, 208], ["P3", "-0.0003", 465, 210], ["P2", "+0.0031", 458, 212], ["P1", "-0.0018", 451, 214], ["P10", "+0.0022", 513, 198], ["P11", "+0.0018", 520, 196], ["P12", "+0.0028", 527, 194], ["P13", "+0.0005", 533, 193], ["P14", "-0.0006", 540, 191]];
leftColumn.forEach((p, i) => { const y = 104 + i * 19.4; points.push([p[0], p[1], 358, y, 385, y + 9, p[2], p[3]]); });
const rightColumn = [["P24", "-0.0052", 615, 171], ["P23", "-0.0018", 603, 173], ["P22", "-0.0020", 597, 175], ["P21", "-0.0024", 590, 177], ["P20", "-0.0026", 583, 179], ["P19", "-0.0009", 576, 181], ["P18", "-0.0005", 569, 183], ["P17", "-0.0016", 562, 184], ["P16", "-0.0019", 555, 186], ["P15", "-0.0019", 548, 188]];
rightColumn.forEach((p, i) => { const y = 143 + i * 19.4; points.push([p[0], p[1], 691, y, 690, y + 9, p[2], p[3]]); });

document.getElementById("leaders").innerHTML = points.map(p => `<path d="M${p[4]} ${p[5]}L${p[6]} ${p[7]}"/>`).join("");
document.getElementById("labels").innerHTML = points.map(p => {
  const y = Math.round(p[3]) - .5, x = Math.round(p[2]) - .5;
  return `<g class="tag"><rect x="${x}" y="${y}" width="27" height="17"/><path d="M${x} ${y + 9}h27"/><text x="${x + 3}" y="${y + 7}">${p[0]}</text><text x="${x + 1}" y="${y + 15}">${p[1]}</text></g>`;
}).join("");

const results = [
  ["0", "KURVE1", "", "X", "0.0000", "", "", "", "", ""],
  ["0", "KURVE1", "", "Z", "0.0000", "", "", "", "", ""],
  ["0", "KURVE1", "XZ", "WD", "0°00'00\"", "", "", "", "", ""],
  ["0", "KURVE1", "", "R", "0.0000", "", "", "", "", ""],
  ["8", "KURVE1", "", "Mx", "0.0177", "0.0000", "+0.0250", "-0.0250", "+0.0177", "71%"],
  ["9", "KURVE1", "", "Mn", "-0.0066", "0.0000", "+0.0000", "-0.0100", "-0.0066", "-31%"],
  ["10", "KURVE1", "", "Lf", "0.0353", "", "+0.0500", "", "+0.0353", "71%"]
];
document.getElementById("results").innerHTML = results.map((r, i) => {
  const cls = { 1: "l", 2: "c", 3: "l" };
  const cells = r.map((v, c) => `<td class="${cls[c] || ""}${v === "" && c > 4 ? " empty" : ""}">${v}</td>`).join("");
  return `<tr${i < 4 ? ' class="off"' : ""}>${cells}<td class="box"><input type="checkbox" aria-label="Druck ${i + 1}"${i > 3 ? " checked" : ""}></td><td class="box"><input type="checkbox" aria-label="Stat ${i + 1}" disabled></td></tr>`;
}).join("") +
  `<tr class="off"><td></td><td>PKTE.:</td><td>39</td><td class="l">Mx</td><td>+0.0177</td><td><div class="split"><span>(28)</span><span>Mn</span></div></td><td>-0.0066</td><td class="l">(29)</td><td class="none"></td><td class="none"></td><td class="box"><input type="checkbox" aria-label="Druck 8"></td><td class="box"></td></tr>`;
```
